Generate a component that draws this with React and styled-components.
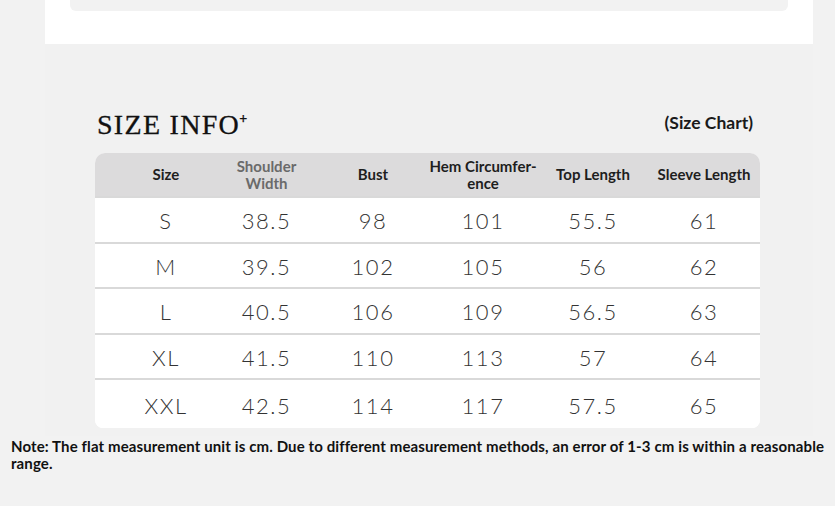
import React from "react";
import styled, { createGlobalStyle } from "styled-components";

const GlobalStyle = createGlobalStyle`
  body {
    margin: 0;
    background: #f2f2f2;
    font-family: Lato, "Liberation Sans", sans-serif;
  }
`;

const rows = [
  ["S", "38.5", "98", "101", "55.5", "61"],
  ["M", "39.5", "102", "105", "56", "62"],
  ["L", "40.5", "106", "109", "56.5", "63"],
  ["XL", "41.5", "110", "113", "57", "64"],
  ["XXL", "42.5", "114", "117", "57.5", "65"],
];

const heads = [
  { label: "Size" },
  { label: "Shoulder", second: "Width", muted: true },
  { label: "Bust" },
  { label: "Hem Circumfer-", second: "ence" },
  { label: "Top Length" },
  { label: "Sleeve Length" },
];

const Page = styled.div`
  width: 835px;
  height: 506px;
  overflow: hidden;
`;

const TopCard = styled.div`
  margin-left: 45px;
  width: 768px;
  box-sizing: border-box;
  padding: 0 25px 33px;
  background: #fff;
`;

const TopInner = styled.div`
  height: 11px;
  background: #f2f2f2;
  border-radius: 0 0 6px 6px;
`;

const Picture = styled.div`
  margin-left: 45px;
  width: 768px;
  height: 392px;
  box-sizing: border-box;
  padding: 65px 0 0 50px;
  background: #f1f1f1;
`;

const TitleRow = styled.div`
  display: flex;
  align-items: center;
  justify-content: space-between;
  width: 658px;
  height: 32px;
  margin-bottom: 12px;
`;

const Title = styled.div`
  font-family: "Liberation Serif", "DejaVu Serif", serif;
  font-size: 28px;
  letter-spacing: 1.3px;
  color: #111;
  padding-left: 2px;
  -webkit-text-stroke: 0.3px #111;
  sup {
    font-size: 14px;
    font-weight: 700;
    vertical-align: 11px;
    margin-left: -1px;
  }
`;

const Subtitle = styled.div`
  font-weight: 700;
  font-size: 17.5px;
  color: #1a1a1a;
  margin-top: -5px;
`;

const Table = styled.div`
  width: 665px;
  border-radius: 10px 10px 8px 8px;
  overflow: hidden;
  background: #fff;
`;

const Row = styled.div`
  display: grid;
  grid-template-columns: 98px 103px 110px 110px 110px 112px;
  padding-left: 22px;
  box-sizing: border-box;
  height: ${(p) => (p.head ? "45px" : "45.5px")};
  align-items: center;
  background: ${(p) => (p.head ? "#dcdbdc" : "#fff")};
  border-bottom: 2px solid #d9d9d9;
  &:last-child {
    border-bottom: none;
    height: 48px;
  }
`;

const HeadCell = styled.div`
  text-align: center;
  font-size: 15px;
  line-height: 17px;
  font-weight: 700;
  color: ${(p) => (p.muted ? "#6a6a6a" : "#1e1e1e")};
  white-space: nowrap;
`;

const Cell = styled.div`
  text-align: center;
  font-family: Lato, "Liberation Sans", sans-serif;
  font-weight: 300;
  font-size: 22px;
  letter-spacing: 1.5px;
  color: #333;
  padding-top: 2px;
`;

const Note = styled.p`
  margin: 2px 0 0;
  padding: 0 8px 0 11px;
  font-weight: 700;
  font-size: 15px;
  line-height: 17px;
  letter-spacing: 0.12px;
  color: #111;
`;

export default function App() {
  return (
    <Page>
      <GlobalStyle />
      <TopCard>
        <TopInner />
      </TopCard>
      <Picture>
        <TitleRow>
          <Title>
            SIZE INFO<sup>+</sup>
          </Title>
          <Subtitle>(Size Chart)</Subtitle>
        </TitleRow>
        <Table>
          <Row head>
            {heads.map((h) => (
              <HeadCell key={h.label} muted={h.muted}>
                {h.label}
                {h.second && (
                  <>
                    <br />
                    {h.second}
                  </>
                )}
              </HeadCell>
            ))}
          </Row>
          {rows.map((r) => (
            <Row key={r[0]}>
              {r.map((v, i) => (
                <Cell key={i}>{v}</Cell>
              ))}
            </Row>
          ))}
        </Table>
      </Picture>
      <Note>
        Note: The flat measurement unit is cm. Due to different measurement
        methods, an error of 1-3 cm is within a reasonable range.
      </Note>
    </Page>
  );
}
